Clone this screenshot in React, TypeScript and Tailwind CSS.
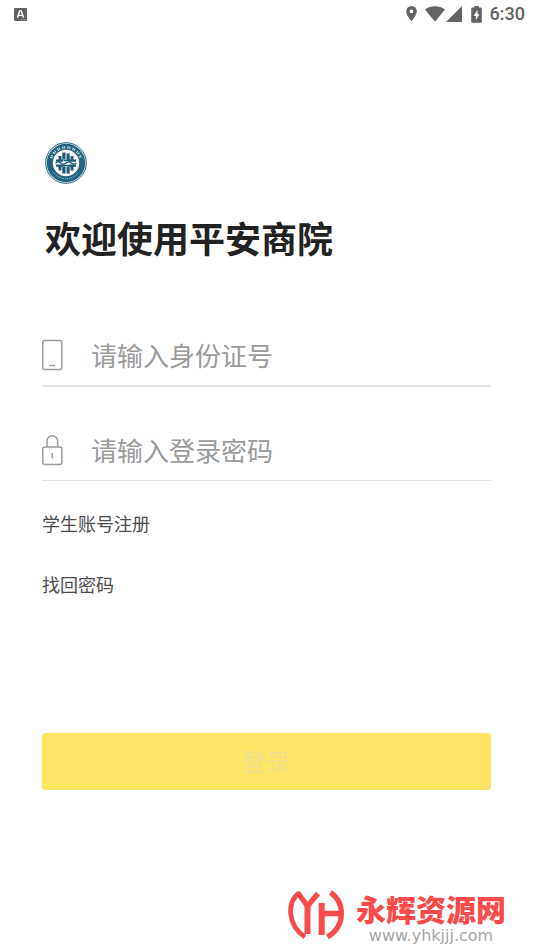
import type { ReactNode } from "react";

function StatusBar() {
  return (
    <header className="flex h-7 items-center justify-between pl-[14px] pr-[9px] text-[#636363]">
      <svg width="13" height="13" viewBox="0 0 13 13" aria-hidden="true">
        <rect width="13" height="13" rx="1" fill="#636363" />
        <path d="M3.5 9.5 5.7 3h1.6l2.2 6.5M4.4 7.4h4.2" fill="none" stroke="#fff" strokeWidth="1.4" />
        <path d="M7 11.8h5" stroke="#c8c8c8" strokeWidth="0.7" strokeDasharray="1 0.6" />
      </svg>
      <div className="flex items-center">
        <svg width="11" height="16" viewBox="0 0 11 16" aria-hidden="true">
          <path fill="#636363" fillRule="evenodd" d="M5.5 0A5.3 5.3 0 0 0 .2 5.3C.2 9.3 5.5 15.4 5.5 15.4s5.3-6.1 5.3-10.1A5.3 5.3 0 0 0 5.5 0Zm0 3.4a1.9 1.9 0 1 1 0 3.8 1.9 1.9 0 0 1 0-3.8Z" />
        </svg>
        <svg className="ml-2" width="20" height="16" viewBox="0 0 20 16" aria-hidden="true">
          <path fill="#636363" d="M0 3.600C2.900 1.400 6.200.3 10 .3s7.100 1.100 10 3.300L10 15.700Z" />
        </svg>
        <svg className="ml-px" width="16" height="16" viewBox="0 0 16 16" aria-hidden="true">
          <path fill="#636363" d="M16 0v16H0Z" />
        </svg>
        <svg className="ml-[9px]" width="11" height="17" viewBox="0 0 11 17" aria-hidden="true">
          <path fill="#636363" d="M3.300 0h4.400v1.600h2.100q1 0 1 1v13.200q0 1-1 1H1.200q-1 0-1-1V2.600q0-1 1-1h2.100Z" />
          <path fill="#fff" d="M6.500 4 2.600 10h2.200v4.200L8.500 8.200H6.500Z" />
        </svg>
        <time className="ml-2 font-[Roboto,sans-serif] text-[18px] font-medium leading-5">6:30</time>
      </div>
    </header>
  );
}

function SchoolSeal() {
  return (
    <svg className="ml-[3px]" width="42" height="42" viewBox="0 0 42 42" role="img" aria-label="校徽">
      <circle cx="21" cy="21" r="20.300" fill="#fff" stroke="#236481" strokeWidth="1" />
      <circle cx="21" cy="21" r="16.200" fill="none" stroke="#236481" strokeWidth="6" />
      <path d="M6.200 16A15.600 15.600 0 0 1 35.800 16" fill="none" stroke="#cfe0e8" strokeWidth="2.600" strokeDasharray="1.200 0.800 1 2.200" />
      <path d="M8.500 30.500A15.800 15.800 0 0 0 33.500 30.500" fill="none" stroke="#a9c8d6" strokeWidth="1" strokeDasharray="1 0.900" />
      <g fill="#1d5b7a">
        <path d="M17.300 10.500h3.200v7h-3.200zM21.500 11.500h3.200v6.500h-3.200zM13.500 14h3v4.500h-3zM25.500 14h3v4.500h-3zM11 17.500h7v2.300h-7zM24 17.500h7v2.300h-7zM17.300 24.500h3.200v7h-3.200zM21.500 24.500h3.200v7h-3.200zM13.500 24h3v4.500h-3zM25.500 24h3v4.500h-3zM11 22.500h7v2.300h-7zM24 22.500h7v2.300h-7z" />
      </g>
      <path d="M10.500 21q2.600-2.200 5.200 0t5.300 0 5.300 0 5.200 0" fill="none" stroke="#1d5b7a" strokeWidth="1.300" />
      <path d="M18.500 18.500h6M18 23.500h6" stroke="#1d5b7a" strokeWidth="1.500" />
    </svg>
  );
}

function PhoneIcon() {
  return (
    <svg width="21" height="32" viewBox="0 0 21 32" fill="none" stroke="#9c9c9c" strokeWidth="1.500" aria-hidden="true">
      <rect x="0.800" y="1.500" width="19" height="29" rx="2" />
      <path d="M7.500 26.500h5.500" />
    </svg>
  );
}

function LockIcon() {
  return (
    <svg width="21" height="32" viewBox="0 0 21 32" fill="none" stroke="#9c9c9c" strokeWidth="1.500" aria-hidden="true">
      <rect x="0.800" y="13" width="19" height="17.500" rx="2" />
      <path d="M5 13V7a5.300 5.300 0 0 1 10.600 0v6M10.300 19v5.500" />
    </svg>
  );
}

type FieldProps = {
  id: string;
  label: string;
  type: string;
  icon: ReactNode;
  line: string;
};

function Field({ id, label, type, icon, line }: FieldProps) {
  return (
    <div className={`flex items-center border-[#e4e4e4] ${line}`}>
      <label htmlFor={id} aria-label={label}>
        {icon}
      </label>
      <input
        id={id}
        type={type}
        placeholder={label}
        className="ml-7 h-[60px] min-w-0 flex-1 bg-transparent pb-[2px] text-[26px] text-[#333] outline-none placeholder:text-[#9b9b9b]"
      />
    </div>
  );
}

function SiteMark() {
  return (
    <footer className="mt-[98px] flex items-start justify-end pr-7">
      <svg width="58" height="52" viewBox="0 0 58 52" fill="none" stroke="#fa4b4b" aria-hidden="true">
        <path d="M11 5C-1 14-1 37 17 49" strokeWidth="4.800" />
        <path d="M9.500 4.500 19.500 18 30 5.500" strokeWidth="5.400" strokeLinejoin="round" />
        <path d="M19.500 17v29" strokeWidth="6" />
        <path d="M33.700 15v32" strokeWidth="6" />
        <path d="M34 25.500h19" strokeWidth="5.500" />
        <path d="M42.500 4.500C57.500 15 57.500 38 39.500 49" strokeWidth="5.200" />
      </svg>
      <div className="ml-[10px] flex flex-col items-center pt-1">
        <strong className="text-[30px] font-black leading-8 text-[#fa4b4b]">永辉资源网</strong>
        <span className="mt-1 font-['DejaVu_Sans',sans-serif] text-base leading-4 text-[#a6a6a6]">www.yhkjjj.com</span>
      </div>
    </footer>
  );
}

export default function App() {
  return (
    <div className="min-h-screen bg-white font-['Noto_Sans_CJK_SC',sans-serif]">
      <StatusBar />
      <main className="pl-[42px] pr-[43px] pt-[114px]">
        <SchoolSeal />
        <h1 className="ml-[3px] mt-[29px] text-[36px] font-bold leading-[48px] text-[#222]">欢迎使用平安商院</h1>
        <form className="mt-16" onSubmit={(event) => event.preventDefault()}>
          <Field id="identity" label="请输入身份证号" type="text" icon={<PhoneIcon />} line="mb-[33px] border-b-2" />
          <Field id="password" label="请输入登录密码" type="password" icon={<LockIcon />} line="border-b" />
          <nav className="mt-7 flex flex-col items-start gap-[33px] text-[18px] leading-7 text-[#4d4d4d]">
            <a href="#register">学生账号注册</a>
            <a href="#recover">找回密码</a>
          </nav>
          <button type="submit" className="mt-[135px] h-[57px] w-full rounded-[3px] bg-[#fee564] pb-[2px] text-[24px] text-[#eddf90]">
            登录
          </button>
        </form>
      </main>
      <SiteMark />
    </div>
  );
}
